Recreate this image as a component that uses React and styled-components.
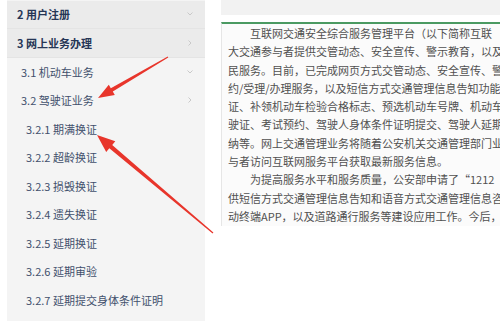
import React from 'react'
import styled, { createGlobalStyle } from 'styled-components'

const GlobalStyle = createGlobalStyle`
  html, body {
    margin: 0;
    padding: 0;
    background: #fff;
  }
  body {
    font-family: "Noto Sans CJK SC", "Noto Sans", sans-serif;
  }
`

const Page = styled.div`
  position: relative;
  width: 500px;
  height: 321px;
  overflow: hidden;
  display: flex;
  align-items: flex-start;
  background: #fff;
`

const Sidebar = styled.nav`
  width: 198px;
  height: 321px;
  margin-left: 7px;
  flex-shrink: 0;
  background: #f4f4f4;
  padding-top: 0.5px;
  box-sizing: border-box;
`

const NavItem = styled.div`
  height: 28.5px;
  display: flex;
  align-items: center;
  justify-content: space-between;
  box-sizing: border-box;
  padding-left: ${(p) => (p.$level === 1 ? 10 : p.$level === 2 ? 14 : 19)}px;
  padding-right: 11px;
  background: ${(p) => (p.$level === 1 ? '#ebebeb' : '#f4f4f4')};
  border-bottom: ${(p) => (p.$level === 1 ? '1px solid #e4e4e4' : 'none')};
  font-size: 11px;
  font-weight: ${(p) => (p.$level === 1 ? 700 : 400)};
  color: ${(p) => (p.$level === 1 ? '#263656' : '#42506c')};
  white-space: nowrap;
`

const Chevron = ({ dir }) => (
  <svg width="8" height="8" viewBox="0 0 8 8">
    {dir === 'down' ? (
      <polyline points="1.5,2.5 4,5 6.5,2.5" fill="none" stroke="#c9c9c9" strokeWidth="1" />
    ) : (
      <polyline points="2.5,1.5 5,4 2.5,6.5" fill="none" stroke="#c9c9c9" strokeWidth="1" />
    )}
  </svg>
)

const Main = styled.main`
  margin-left: 16px;
  width: 330px;
  flex-shrink: 0;
  display: flex;
  flex-direction: column;
  gap: 7px;
`

const TopStrip = styled.div`
  height: 15px;
  background: #f2f2f2;
`

const Article = styled.article`
  border-top: 2px solid #4b9a62;
  border-left: 1px solid #e6e6e6;
  background: #fbfbfb;
  padding: 0 0 1px 6px;
  font-size: 11px;
  line-height: 18.3px;
  color: #505050;
`

const Line = styled.div`
  white-space: nowrap;
  padding-left: ${(p) => (p.$indent ? 22 : 0)}px;
`

const Overlay = styled.svg`
  position: absolute;
  left: 0;
  top: 0;
  pointer-events: none;
`

const nav = [
  { text: '2 用户注册', level: 1, icon: 'down' },
  { text: '3 网上业务办理', level: 1, icon: 'right' },
  { text: '3.1 机动车业务', level: 2, icon: 'down' },
  { text: '3.2 驾驶证业务', level: 2, icon: 'right' },
  { text: '3.2.1 期满换证', level: 3 },
  { text: '3.2.2 超龄换证', level: 3 },
  { text: '3.2.3 损毁换证', level: 3 },
  { text: '3.2.4 遗失换证', level: 3 },
  { text: '3.2.5 延期换证', level: 3 },
  { text: '3.2.6 延期审验', level: 3 },
  { text: '3.2.7 延期提交身体条件证明', level: 3 },
]

const lines = [
  { t: '互联网交通安全综合服务管理平台（以下简称互联', indent: true },
  { t: '大交通参与者提供交管动态、安全宣传、警示教育，以及' },
  { t: '民服务。目前，已完成网页方式交管动态、安全宣传、警' },
  { t: '约/受理/办理服务，以及短信方式交通管理信息告知功能' },
  { t: '证、补领机动车检验合格标志、预选机动车号牌、机动车' },
  { t: '驶证、考试预约、驾驶人身体条件证明提交、驾驶人延期' },
  { t: '纳等。网上交通管理业务将随着公安机关交通管理部门业' },
  { t: '与者访问互联网服务平台获取最新服务信息。' },
  { t: '为提高服务水平和服务质量，公安部申请了“1212', indent: true },
  { t: '供短信方式交通管理信息告知和语音方式交通管理信息咨' },
  { t: '动终端APP，以及道路通行服务等建设应用工作。今后，' },
]

const App = () => {
  return (
    <>
      <GlobalStyle />
      <Page>
        <Sidebar>
          {nav.map((item) => (
            <NavItem key={item.text} $level={item.level}>
              <span>{item.text}</span>
              {item.icon && <Chevron dir={item.icon} />}
            </NavItem>
          ))}
        </Sidebar>
        <Main>
          <TopStrip />
          <Article>
            {lines.map((l, i) => (
              <Line key={i} $indent={l.indent}>{l.t}</Line>
            ))}
          </Article>
        </Main>
        <Overlay width="500" height="321" viewBox="0 0 500 321">
          <polygon
            fill="#e8352b"
            points="168.25,57.43 112.8,91.6 114.8,95.1 98,98 108.8,84.7 110.8,88.2 167.75,56.57"
          />
          <polygon
            fill="#e8352b"
            points="213.4,232.5 112.2,144.9 115.3,141.3 97,135 106.2,151.9 109.3,148.3 212.6,233.5"
          />
        </Overlay>
      </Page>
    </>
  )
}

export default App
